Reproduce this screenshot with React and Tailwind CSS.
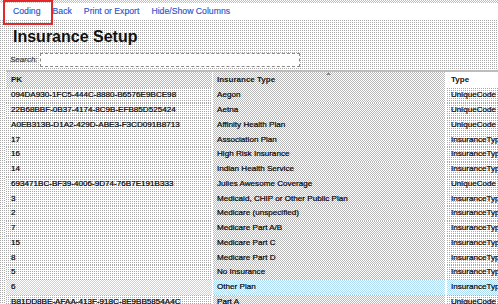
import React from "react";

const rows = [
  ["094DA930-1FC5-444C-8880-B6576E9BCE98", "Aegon", "UniqueCode"],
  ["22B68BBF-0B37-4174-8C9B-EFB85D525424", "Aetna", "UniqueCode"],
  ["A0EB313B-D1A2-429D-ABE3-F3CD091B8713", "Affinity Health Plan", "UniqueCode"],
  ["17", "Association Plan", "InsuranceType"],
  ["16", "High Risk Insurance", "InsuranceType"],
  ["14", "Indian Health Service", "InsuranceType"],
  ["693471BC-BF39-4006-9D74-76B7E191B333", "Julies Awesome Coverage", "UniqueCode"],
  ["3", "Medicaid, CHIP or Other Public Plan", "InsuranceType"],
  ["2", "Medicare (unspecified)", "InsuranceType"],
  ["7", "Medicare Part A/B", "InsuranceType"],
  ["15", "Medicare Part C", "InsuranceType"],
  ["8", "Medicare Part D", "InsuranceType"],
  ["5", "No Insurance", "InsuranceType"],
  ["6", "Other Plan", "InsuranceType"],
  ["B81DD8BE-AFAA-413F-918C-8E9BB5854A4C", "Part A", "UniqueCode"],
];

const sparse =
  "bg-white bg-[conic-gradient(at_1px_1px,transparent_75%,#a9a9a9_0)] bg-[length:2px_2px]";
const dense =
  "bg-[repeating-conic-gradient(#b9b9b9_0_25%,#ffffff_0_50%)] bg-[length:2px_2px]";
const blue =
  "bg-[repeating-conic-gradient(#aedcf5_0_25%,#ffffff_0_50%)] bg-[length:2px_2px]";

export default function App() {
  return (
    <div className="relative w-[498px] h-[304px] overflow-hidden bg-white font-['Liberation_Sans',Arial,sans-serif] text-black">
      {/* top dotted strip */}
      <div className="h-[3px] bg-[repeating-conic-gradient(#a0c8dc_0_25%,#ffffff_0_50%)] bg-[length:2px_2px]" />
      {/* nav */}
      <nav className="h-[17px] bg-white flex items-center gap-[12px] pl-[13px] text-[8.7px] text-[#2a56cc] [-webkit-text-stroke:0.15px_#2a56cc]">
        <span>Coding</span>
        <span>Back</span>
        <span>Print or Export</span>
        <span>Hide/Show Columns</span>
      </nav>
      {/* annotation box */}
      <div className="absolute left-[3px] top-0 w-[50px] h-[25px] border-2 border-[#e3282a]" />

      <div className={`h-[284px] ${sparse}`}>
        <h1 className="pt-[6.5px] pl-[13px] text-[16px] leading-[20px] font-bold text-[#111]">
          Insurance Setup
        </h1>
        <div className="mt-[6.5px] flex items-center h-[14px] pl-[10px]">
          <span className="text-[8px] italic text-[#333] w-[30px] [-webkit-text-stroke:0.15px_#333]">Search:</span>
          <div className="w-[260px] h-[14px] bg-white border border-dashed border-[#8a8a8a]" />
        </div>
        <div className="mt-[3px] ml-[6px] border-t-2 border-[#bdbdbd]">
          <div className="flex h-[16px] items-center text-[8px] font-bold text-[#111]">
            <div className={`w-[207px] h-full flex items-center pl-[5px] border-r border-white ${dense}`}>PK</div>
            <div className={`relative w-[234px] h-full flex items-center pl-[4px] border-r-2 border-white ${dense}`}>
              Insurance Type
              <svg className="absolute left-[113px] top-0" width="5" height="3" viewBox="0 0 5 3">
                <path d="M0 3 L2.5 0 L5 3 Z" fill="#888" />
              </svg>
            </div>
            <div className="flex-1 h-full flex items-center pl-[4px] bg-white">Type</div>
          </div>
          {rows.map((r, i) => {
            const hl = i === 13;
            return (
              <div key={i} className="flex h-[14.75px] items-center text-[8.1px] [-webkit-text-stroke:0.2px_#000]">
                <div className={`w-[207px] h-full flex items-center pl-[5px] border-r border-white whitespace-nowrap ${hl ? blue : sparse}`}>
                  {r[0]}
                </div>
                <div className={`w-[234px] h-full flex items-center pl-[4px] border-r-2 border-white whitespace-nowrap ${hl ? blue : dense}`}>
                  {r[1]}
                </div>
                <div className={`flex-1 h-full flex items-center pl-[4px] whitespace-nowrap overflow-hidden ${hl ? blue : sparse}`}>
                  {r[2]}
                </div>
              </div>
            );
          })}
        </div>
      </div>
    </div>
  );
}
